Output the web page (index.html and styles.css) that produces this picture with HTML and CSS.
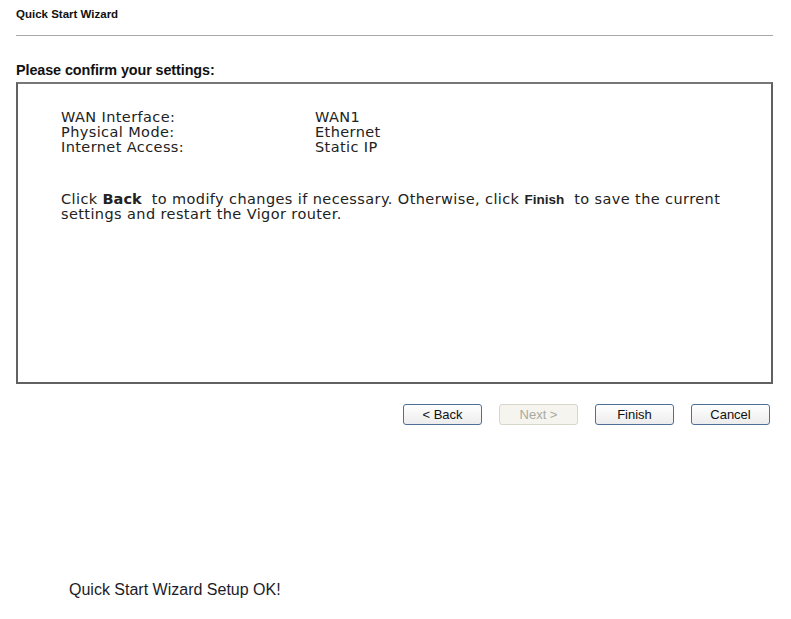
FILE: index.html
```html
<!DOCTYPE html>
<html>
<head>
<meta charset="utf-8">
<link rel="stylesheet" href="styles.css">
</head>
<body>
<div class="page">
  <div class="header">Quick Start Wizard</div>
  <div class="subhead">Please confirm your settings:</div>
  <div class="panel">
    <div class="rows">
      <div class="row"><span class="label">WAN Interface:</span><span class="value">WAN1</span></div>
      <div class="row"><span class="label">Physical Mode:</span><span class="value">Ethernet</span></div>
      <div class="row"><span class="label">Internet Access:</span><span class="value">Static IP</span></div>
    </div>
    <p class="note">Click <b class="kw">Back</b>&nbsp; to modify changes if necessary. Otherwise, click <b class="kw2">Finish</b>&nbsp; to save the current settings and restart the Vigor router.</p>
  </div>
  <div class="actions">
    <button class="btn">&lt; Back</button>
    <button class="btn disabled" disabled>Next &gt;</button>
    <button class="btn">Finish</button>
    <button class="btn">Cancel</button>
  </div>
  <div class="done">Quick Start Wizard Setup OK!</div>
</div>
</body>
</html>
```
FILE: styles.css
```css
html, body {
  margin: 0;
  padding: 0;
  background: #ffffff;
}
.page {
  margin-left: 16px;
  width: 757px;
  display: flex;
  flex-direction: column;
}
.header {
  font-family: "Liberation Sans", Arial, sans-serif;
  font-weight: bold;
  font-size: 11.5px;
  line-height: 14px;
  color: #111;
  padding: 7px 0 14px 0;
  border-bottom: 1px solid #a8a8a8;
}
.subhead {
  font-family: "Liberation Sans", Arial, sans-serif;
  font-weight: bold;
  font-size: 14.4px;
  line-height: 16px;
  color: #111;
  margin-top: 26px;
  letter-spacing: -0.1px;
}
.panel {
  box-sizing: border-box;
  margin-top: 4px;
  height: 302px;
  border: 2px solid #616161;
  border-top-color: #777;
  padding: 26px 30px 0 43px;
  font-family: "DejaVu Sans", Verdana, sans-serif;
  font-size: 14.5px;
  letter-spacing: 0.4px;
  color: #222;
}
.rows {
  display: flex;
  flex-direction: column;
}
.row {
  display: flex;
  line-height: 15px;
}
.label {
  width: 254px;
}
.note {
  margin: 37px 0 0 0;
  line-height: 15px;
}
.kw, .kw2 {
  font-family: "DejaVu Sans", Verdana, sans-serif;
  font-weight: bold;
  letter-spacing: 0;
}
.kw2 {
  font-family: "Liberation Sans", Arial, sans-serif;
  font-size: 13.5px;
}
.actions {
  display: flex;
  justify-content: flex-end;
  gap: 17px;
  margin-top: 20px;
  padding-right: 3px;
}
.btn {
  width: 79px;
  height: 21px;
  padding: 0;
  border: 1px solid #4d6f99;
  border-radius: 3px;
  background: linear-gradient(#ffffff, #ececec);
  font-family: "Liberation Sans", Arial, sans-serif;
  font-size: 13px;
  color: #111;
}
.btn.disabled {
  border-color: #d8d6c8;
  background: #f5f4ee;
  color: #aaa9a0;
}
.done {
  margin-top: 156px;
  margin-left: 53px;
  font-family: "Liberation Sans", Arial, sans-serif;
  font-size: 16px;
  color: #1c1c28;
  line-height: 18px;
}
```
